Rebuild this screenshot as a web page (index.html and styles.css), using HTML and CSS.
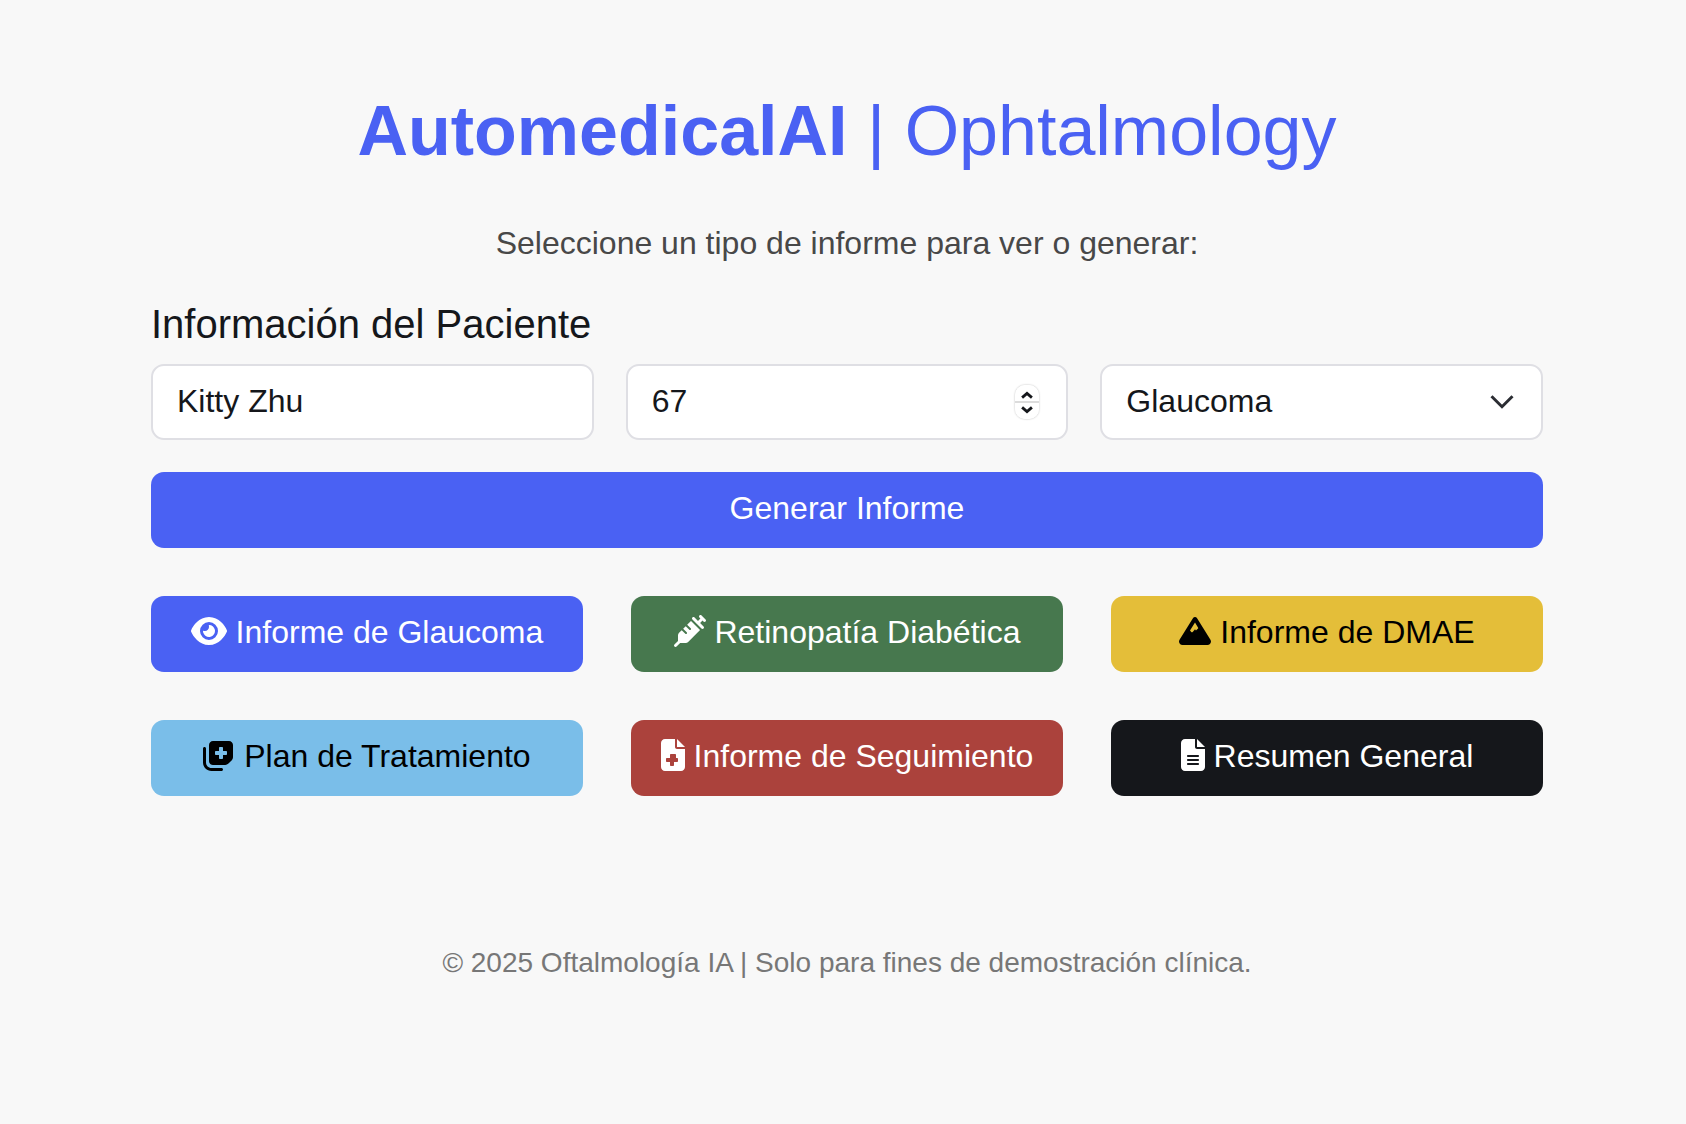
FILE: index.html
```html
<!DOCTYPE html>
<html lang="es">
<head>
  <meta charset="UTF-8" />
  <meta name="viewport" content="width=device-width, initial-scale=1.0"/>
  <title>AutomedicalAI | Ophtalmology</title>
  <link rel="stylesheet" href="styles.css">
</head>
<body>

  <main class="container">
    <h1><strong>AutomedicalAI</strong> | Ophtalmology</h1>
    <p class="intro">Seleccione un tipo de informe para ver o generar:</p>

    <h2>Información del Paciente</h2>
    <form class="patient-form" onsubmit="return false">
      <input class="field" type="text" value="Kitty Zhu" aria-label="Nombre"/>
      <div class="field-wrap">
        <input class="field" type="number" value="67" aria-label="Edad"/>
        <!-- native spinner is hidden, this one is drawn -->
        <span class="spinner">
          <svg viewBox="0 0 10 6"><path d="M1.5 4.5 5 1.5l3.5 3"/></svg>
          <svg viewBox="0 0 10 6"><path d="M1.5 1.5 5 4.5l3.5-3"/></svg>
        </span>
      </div>
      <div class="field-wrap">
        <select class="field" aria-label="Tipo">
          <option>Glaucoma</option>
          <option>Retinopatía Diabética</option>
          <option>DMAE</option>
        </select>
        <svg class="caret" viewBox="0 0 16 10"><path d="M1 1.500 8 8.500l7-7"/></svg>
      </div>
      <button class="btn btn-blue btn-wide" type="submit">Generar Informe</button>
    </form>

    <div class="reports">
      <button class="btn btn-blue">
        <svg class="icon" viewBox="0 0 576 512"><path d="M288 32c-80.800 0-145.500 36.800-192.600 80.600C48.600 156 17.300 208 2.500 243.700c-3.300 7.900-3.300 16.700 0 24.600C17.300 304 48.600 356 95.400 399.400C142.500 443.200 207.200 480 288 480s145.500-36.800 192.600-80.600c46.800-43.500 78.100-95.400 93-131.100c3.300-7.900 3.300-16.700 0-24.600c-14.900-35.700-46.200-87.700-93-131.100C433.500 68.800 368.800 32 288 32zM144 256a144 144 0 1 1 288 0 144 144 0 1 1 -288 0zm144-64c0 35.300-28.700 64-64 64c-7.100 0-13.900-1.200-20.300-3.300c-5.500-1.800-11.900 1.600-11.700 7.400c.3 6.900 1.300 13.800 3.200 20.700c13.700 51.200 66.400 81.600 117.600 67.900s81.600-66.400 67.900-117.600c-11.100-41.500-47.800-69.400-88.600-71.100c-5.800-.2-9.200 6.100-7.400 11.700c2.100 6.400 3.300 13.200 3.300 20.300z"/></svg>
        Informe de Glaucoma
      </button>
      <button class="btn btn-green">
        <svg class="icon" viewBox="0 0 512 512"><path d="M441 7l32 32 32 32c9.400 9.400 9.400 24.600 0 33.900s-24.600 9.400-33.900 0l-15-15L417.900 128l55 55c9.400 9.400 9.400 24.600 0 33.900s-24.600 9.400-33.900 0l-72-72L295 73c-9.400-9.400-9.400-24.600 0-33.900s24.600-9.400 33.900 0l55 55L422.100 56 407 41c-9.400-9.400-9.400-24.600 0-33.900s24.600-9.400 33.900 0zM210.300 155.700l61.100-61.100c.3 .3 .6 .7 1 1l16 16 56 56 56 56 16 16c.3 .3 .6 .7 1 1l-191 191c-10.500 10.500-24.700 16.400-39.600 16.400H97.900L41 505c-9.400 9.400-24.600 9.400-33.900 0s-9.400-24.600 0-33.900l57-57V325.300c0-14.900 5.900-29.100 16.400-39.600l43.300-43.300 57 57c6.200 6.200 16.400 6.200 22.600 0s6.200-16.400 0-22.600l-57-57 41.400-41.400 57 57c6.200 6.200 16.400 6.200 22.600 0s6.200-16.400 0-22.600l-57-57z"/></svg>
        Retinopatía Diabética
      </button>
      <button class="btn btn-yellow">
        <svg class="icon" viewBox="0 0 512 512"><path fill-rule="evenodd" d="M256 32c12.500 0 24.100 6.400 30.800 17L503.400 394.400c5.600 8.900 8.600 19.200 8.600 29.700c0 30.900-25 55.900-55.900 55.900H55.900C25 480 0 455 0 424.100c0-10.500 3-20.800 8.600-29.700L225.200 49c6.600-10.600 18.300-17 30.800-17zM256 120 176 247l20 24c6 7 17 7 23 0l28-33c5-6 13-6 18 0l6 8 34-30c4-3 4-8 1-12l-50-84z"/></svg>
        Informe de DMAE
      </button>
      <button class="btn btn-sky">
        <svg class="icon" viewBox="0 0 512 512"><path d="M96 352V96c0-35.300 28.700-64 64-64H416c35.300 0 64 28.700 64 64V293.500c0 17-6.700 33.300-18.700 45.300l-58.500 58.500c-12 12-28.300 18.700-45.300 18.700H160c-35.300 0-64-28.700-64-64zM272 128c-8.800 0-16 7.200-16 16v48H208c-8.800 0-16 7.200-16 16v32c0 8.800 7.200 16 16 16h48v48c0 8.800 7.200 16 16 16h32c8.800 0 16-7.200 16-16V256h48c8.800 0 16-7.200 16-16V208c0-8.800-7.200-16-16-16H320V144c0-8.800-7.200-16-16-16H272zm24 336c13.300 0 24 10.700 24 24s-10.700 24-24 24H136C60.900 512 0 451.100 0 376V152c0-13.300 10.700-24 24-24s24 10.700 24 24l0 224c0 48.600 39.400 88 88 88H296z"/></svg>
        Plan de Tratamiento
      </button>
      <button class="btn btn-red">
        <svg class="icon" viewBox="0 0 384 512"><path fill-rule="evenodd" d="M64 0C28.700 0 0 28.700 0 64V448c0 35.300 28.700 64 64 64H320c35.300 0 64-28.700 64-64V160H256c-17.700 0-32-14.300-32-32V0H64zM256 0V128H384L256 0zM160 240c-8.800 0-16 7.200-16 16v48H96c-8.800 0-16 7.200-16 16v32c0 8.800 7.200 16 16 16h48v48c0 8.800 7.200 16 16 16h32c8.800 0 16-7.200 16-16V368h48c8.800 0 16-7.200 16-16V320c0-8.800-7.200-16-16-16H240V256c0-8.800-7.200-16-16-16H160z"/></svg>
        Informe de Seguimiento
      </button>
      <button class="btn btn-dark">
        <svg class="icon" viewBox="0 0 384 512"><path fill-rule="evenodd" d="M64 0C28.700 0 0 28.700 0 64V448c0 35.300 28.700 64 64 64H320c35.300 0 64-28.700 64-64V160H256c-17.700 0-32-14.300-32-32V0H64zM256 0V128H384L256 0zM112 256H272c8.800 0 16 7.200 16 16s-7.200 16-16 16H112c-8.800 0-16-7.200-16-16s7.200-16 16-16zm0 64H272c8.800 0 16 7.200 16 16s-7.200 16-16 16H112c-8.800 0-16-7.200-16-16s7.200-16 16-16zm0 64H272c8.800 0 16 7.200 16 16s-7.200 16-16 16H112c-8.800 0-16-7.200-16-16s7.200-16 16-16z"/></svg>
        Resumen General
      </button>
    </div>

    <footer>© 2025 Oftalmología IA | Solo para fines de demostración clínica.</footer>
  </main>

</body>
</html>
```

FILE: styles.css
```css
html, body {
  margin: 0;
  padding: 0;
}

body {
  font-family: "Liberation Sans", Arial, sans-serif;
  background-color: #f8f8f8;
  color: #15171b;
  min-height: 100vh;
  overflow: hidden;
}

.container {
  width: 1392px;
  margin-left: 151px;
  padding-top: 88px;
}

h1 {
  margin: 0;
  font-size: 70px;
  line-height: 86px;
  font-weight: 400;
  text-align: center;
  color: #4a61f3;
}

h1 strong {
  font-weight: 700;
}

.intro {
  margin: 50px 0 0;
  font-size: 32px;
  line-height: 38px;
  color: #484848;
  text-align: center;
}

h2 {
  margin: 38px 0 0;
  font-size: 40px;
  line-height: 48px;
  font-weight: 400;
}

.patient-form {
  margin-top: 16px;
  display: grid;
  grid-template-columns: repeat(3, 1fr);
  gap: 32px;
}

.field-wrap {
  position: relative;
}

.field {
  display: block;
  width: 100%;
  height: 76px;
  box-sizing: border-box;
  padding: 0 24px 2px;
  background-color: #fff;
  border: 2px solid #dfdfe4;
  border-radius: 13px;
  font-family: inherit;
  font-size: 32px;
  color: #15171b;
  appearance: none;
  -webkit-appearance: none;
  outline: none;
}

input[type="number"] {
  -moz-appearance: textfield;
}

input[type="number"]::-webkit-inner-spin-button,
input[type="number"]::-webkit-outer-spin-button {
  -webkit-appearance: none;
  margin: 0;
}

/* number stepper drawn over the input */
.spinner {
  position: absolute;
  top: 21px;
  right: 29px;
  width: 24px;
  height: 34px;
  box-sizing: border-box;
  display: flex;
  flex-direction: column;
  justify-content: space-between;
  align-items: center;
  padding: 6px 0 5px;
  border-radius: 10px;
  background: linear-gradient(#fff 47%, #dcdcdc 47%, #dcdcdc 53%, #fff 53%);
  box-shadow: 0 0 2px rgba(0, 0, 0, 0.3);
}

.spinner svg {
  width: 14px;
  height: 9px;
  fill: none;
  stroke: #15171b;
  stroke-width: 2;
}

.caret {
  position: absolute;
  top: 30px;
  right: 29px;
  width: 24px;
  height: 15px;
  fill: none;
  stroke: #2b2d33;
  stroke-width: 2;
  pointer-events: none;
}

.btn {
  display: block;
  width: 100%;
  height: 76px;
  padding: 0 0 3px;
  border: none;
  border-radius: 13px;
  font-family: inherit;
  font-size: 32px;
  text-align: center;
  cursor: pointer;
}

.btn-wide {
  grid-column: 1 / -1;
}

.btn-blue { background-color: #4a61f3; color: #fff; }
.btn-green { background-color: #47784e; color: #fff; }
.btn-yellow { background-color: #e4be39; color: #000; }
.btn-sky { background-color: #7abee9; color: #000; }
.btn-red { background-color: #ab423c; color: #fff; }
.btn-dark { background-color: #15171b; color: #fff; }

.icon {
  height: 1em;
  fill: currentColor;
  vertical-align: -0.125em;
}

.reports {
  margin-top: 48px;
  display: grid;
  grid-template-columns: repeat(3, 1fr);
  gap: 48px;
}

footer {
  margin-top: 149px;
  font-size: 28px;
  line-height: 36px;
  color: #777;
  text-align: center;
}
```
